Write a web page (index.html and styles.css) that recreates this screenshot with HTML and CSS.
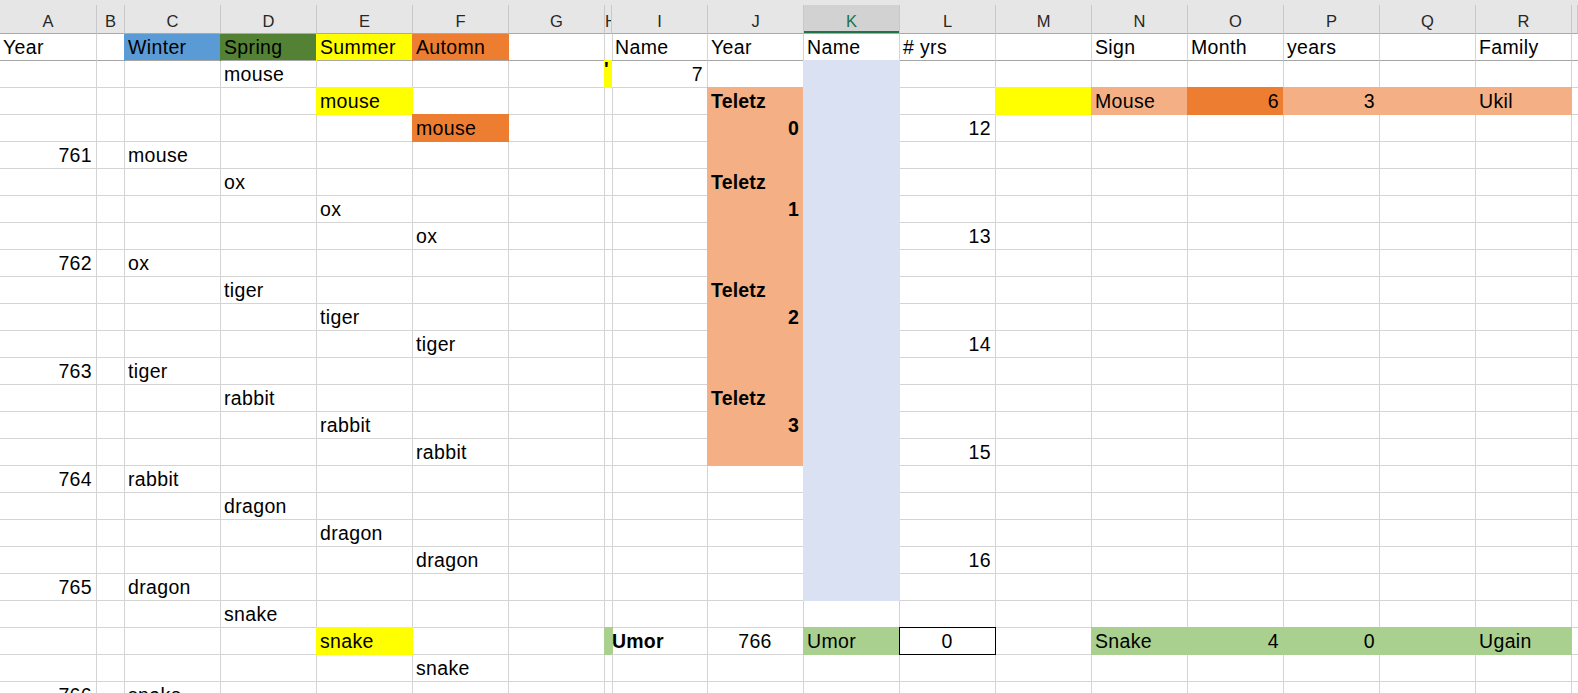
FILE: index.html
```html
<!DOCTYPE html>
<html>
<head>
<meta charset="utf-8">
<title>Sheet</title>
<link rel="stylesheet" href="styles.css">
</head>
<body>
<div class="sheet">
  <div class="topstrip"></div>
  <div class="row colheads">
    <div class="h">A</div><div class="h">B</div><div class="h">C</div><div class="h">D</div><div class="h">E</div><div class="h">F</div><div class="h">G</div><div class="h narrow">H</div><div class="h">I</div><div class="h">J</div><div class="h active">K</div><div class="h">L</div><div class="h">M</div><div class="h">N</div><div class="h">O</div><div class="h">P</div><div class="h">Q</div><div class="h">R</div><div class="h"></div>
  </div>
  <!-- row 1 -->
  <div class="row titles">
    <div class="c">Year</div><div class="c"></div><div class="c f-blue">Winter</div><div class="c f-green">Spring</div><div class="c f-yellow">Summer</div><div class="c f-orange">Automn</div><div class="c"></div><div class="c"></div><div class="c">Name</div><div class="c">Year</div><div class="c">Name</div><div class="c"># yrs</div><div class="c"></div><div class="c">Sign</div><div class="c">Month</div><div class="c">years</div><div class="c"></div><div class="c">Family</div><div class="c"></div>
  </div>
  <!-- row 2 -->
  <div class="row">
    <div class="c"></div><div class="c"></div><div class="c"></div><div class="c">mouse</div><div class="c"></div><div class="c"></div><div class="c"></div><div class="c f-yellow clip"><span class="tick">'</span></div><div class="c r">7</div><div class="c"></div><div class="c f-sky"></div><div class="c"></div><div class="c"></div><div class="c"></div><div class="c"></div><div class="c"></div><div class="c"></div><div class="c"></div><div class="c"></div>
  </div>
  <!-- row 3 -->
  <div class="row">
    <div class="c"></div><div class="c"></div><div class="c"></div><div class="c"></div><div class="c f-yellow">mouse</div><div class="c"></div><div class="c"></div><div class="c"></div><div class="c"></div><div class="c f-peach b">Teletz</div><div class="c f-sky"></div><div class="c"></div><div class="c f-yellow"></div><div class="c f-peach">Mouse</div><div class="c f-orange r">6</div><div class="c f-peach r">3</div><div class="c f-peach"></div><div class="c f-peach">Ukil</div><div class="c"></div>
  </div>
  <!-- row 4 -->
  <div class="row">
    <div class="c"></div><div class="c"></div><div class="c"></div><div class="c"></div><div class="c"></div><div class="c f-orange">mouse</div><div class="c"></div><div class="c"></div><div class="c"></div><div class="c f-peach b r">0</div><div class="c f-sky"></div><div class="c r">12</div><div class="c"></div><div class="c"></div><div class="c"></div><div class="c"></div><div class="c"></div><div class="c"></div><div class="c"></div>
  </div>
  <!-- row 5 -->
  <div class="row">
    <div class="c r">761</div><div class="c"></div><div class="c">mouse</div><div class="c"></div><div class="c"></div><div class="c"></div><div class="c"></div><div class="c"></div><div class="c"></div><div class="c f-peach"></div><div class="c f-sky"></div><div class="c"></div><div class="c"></div><div class="c"></div><div class="c"></div><div class="c"></div><div class="c"></div><div class="c"></div><div class="c"></div>
  </div>
  <!-- row 6 -->
  <div class="row">
    <div class="c"></div><div class="c"></div><div class="c"></div><div class="c">ox</div><div class="c"></div><div class="c"></div><div class="c"></div><div class="c"></div><div class="c"></div><div class="c f-peach b">Teletz</div><div class="c f-sky"></div><div class="c"></div><div class="c"></div><div class="c"></div><div class="c"></div><div class="c"></div><div class="c"></div><div class="c"></div><div class="c"></div>
  </div>
  <!-- row 7 -->
  <div class="row">
    <div class="c"></div><div class="c"></div><div class="c"></div><div class="c"></div><div class="c">ox</div><div class="c"></div><div class="c"></div><div class="c"></div><div class="c"></div><div class="c f-peach b r">1</div><div class="c f-sky"></div><div class="c"></div><div class="c"></div><div class="c"></div><div class="c"></div><div class="c"></div><div class="c"></div><div class="c"></div><div class="c"></div>
  </div>
  <!-- row 8 -->
  <div class="row">
    <div class="c"></div><div class="c"></div><div class="c"></div><div class="c"></div><div class="c"></div><div class="c">ox</div><div class="c"></div><div class="c"></div><div class="c"></div><div class="c f-peach"></div><div class="c f-sky"></div><div class="c r">13</div><div class="c"></div><div class="c"></div><div class="c"></div><div class="c"></div><div class="c"></div><div class="c"></div><div class="c"></div>
  </div>
  <!-- row 9 -->
  <div class="row">
    <div class="c r">762</div><div class="c"></div><div class="c">ox</div><div class="c"></div><div class="c"></div><div class="c"></div><div class="c"></div><div class="c"></div><div class="c"></div><div class="c f-peach"></div><div class="c f-sky"></div><div class="c"></div><div class="c"></div><div class="c"></div><div class="c"></div><div class="c"></div><div class="c"></div><div class="c"></div><div class="c"></div>
  </div>
  <!-- row 10 -->
  <div class="row">
    <div class="c"></div><div class="c"></div><div class="c"></div><div class="c">tiger</div><div class="c"></div><div class="c"></div><div class="c"></div><div class="c"></div><div class="c"></div><div class="c f-peach b">Teletz</div><div class="c f-sky"></div><div class="c"></div><div class="c"></div><div class="c"></div><div class="c"></div><div class="c"></div><div class="c"></div><div class="c"></div><div class="c"></div>
  </div>
  <!-- row 11 -->
  <div class="row">
    <div class="c"></div><div class="c"></div><div class="c"></div><div class="c"></div><div class="c">tiger</div><div class="c"></div><div class="c"></div><div class="c"></div><div class="c"></div><div class="c f-peach b r">2</div><div class="c f-sky"></div><div class="c"></div><div class="c"></div><div class="c"></div><div class="c"></div><div class="c"></div><div class="c"></div><div class="c"></div><div class="c"></div>
  </div>
  <!-- row 12 -->
  <div class="row">
    <div class="c"></div><div class="c"></div><div class="c"></div><div class="c"></div><div class="c"></div><div class="c">tiger</div><div class="c"></div><div class="c"></div><div class="c"></div><div class="c f-peach"></div><div class="c f-sky"></div><div class="c r">14</div><div class="c"></div><div class="c"></div><div class="c"></div><div class="c"></div><div class="c"></div><div class="c"></div><div class="c"></div>
  </div>
  <!-- row 13 -->
  <div class="row">
    <div class="c r">763</div><div class="c"></div><div class="c">tiger</div><div class="c"></div><div class="c"></div><div class="c"></div><div class="c"></div><div class="c"></div><div class="c"></div><div class="c f-peach"></div><div class="c f-sky"></div><div class="c"></div><div class="c"></div><div class="c"></div><div class="c"></div><div class="c"></div><div class="c"></div><div class="c"></div><div class="c"></div>
  </div>
  <!-- row 14 -->
  <div class="row">
    <div class="c"></div><div class="c"></div><div class="c"></div><div class="c">rabbit</div><div class="c"></div><div class="c"></div><div class="c"></div><div class="c"></div><div class="c"></div><div class="c f-peach b">Teletz</div><div class="c f-sky"></div><div class="c"></div><div class="c"></div><div class="c"></div><div class="c"></div><div class="c"></div><div class="c"></div><div class="c"></div><div class="c"></div>
  </div>
  <!-- row 15 -->
  <div class="row">
    <div class="c"></div><div class="c"></div><div class="c"></div><div class="c"></div><div class="c">rabbit</div><div class="c"></div><div class="c"></div><div class="c"></div><div class="c"></div><div class="c f-peach b r">3</div><div class="c f-sky"></div><div class="c"></div><div class="c"></div><div class="c"></div><div class="c"></div><div class="c"></div><div class="c"></div><div class="c"></div><div class="c"></div>
  </div>
  <!-- row 16 -->
  <div class="row">
    <div class="c"></div><div class="c"></div><div class="c"></div><div class="c"></div><div class="c"></div><div class="c">rabbit</div><div class="c"></div><div class="c"></div><div class="c"></div><div class="c f-peach"></div><div class="c f-sky"></div><div class="c r">15</div><div class="c"></div><div class="c"></div><div class="c"></div><div class="c"></div><div class="c"></div><div class="c"></div><div class="c"></div>
  </div>
  <!-- row 17 -->
  <div class="row">
    <div class="c r">764</div><div class="c"></div><div class="c">rabbit</div><div class="c"></div><div class="c"></div><div class="c"></div><div class="c"></div><div class="c"></div><div class="c"></div><div class="c"></div><div class="c f-sky"></div><div class="c"></div><div class="c"></div><div class="c"></div><div class="c"></div><div class="c"></div><div class="c"></div><div class="c"></div><div class="c"></div>
  </div>
  <!-- row 18 -->
  <div class="row">
    <div class="c"></div><div class="c"></div><div class="c"></div><div class="c">dragon</div><div class="c"></div><div class="c"></div><div class="c"></div><div class="c"></div><div class="c"></div><div class="c"></div><div class="c f-sky"></div><div class="c"></div><div class="c"></div><div class="c"></div><div class="c"></div><div class="c"></div><div class="c"></div><div class="c"></div><div class="c"></div>
  </div>
  <!-- row 19 -->
  <div class="row">
    <div class="c"></div><div class="c"></div><div class="c"></div><div class="c"></div><div class="c">dragon</div><div class="c"></div><div class="c"></div><div class="c"></div><div class="c"></div><div class="c"></div><div class="c f-sky"></div><div class="c"></div><div class="c"></div><div class="c"></div><div class="c"></div><div class="c"></div><div class="c"></div><div class="c"></div><div class="c"></div>
  </div>
  <!-- row 20 -->
  <div class="row">
    <div class="c"></div><div class="c"></div><div class="c"></div><div class="c"></div><div class="c"></div><div class="c">dragon</div><div class="c"></div><div class="c"></div><div class="c"></div><div class="c"></div><div class="c f-sky"></div><div class="c r">16</div><div class="c"></div><div class="c"></div><div class="c"></div><div class="c"></div><div class="c"></div><div class="c"></div><div class="c"></div>
  </div>
  <!-- row 21 -->
  <div class="row">
    <div class="c r">765</div><div class="c"></div><div class="c">dragon</div><div class="c"></div><div class="c"></div><div class="c"></div><div class="c"></div><div class="c"></div><div class="c"></div><div class="c"></div><div class="c f-sky"></div><div class="c"></div><div class="c"></div><div class="c"></div><div class="c"></div><div class="c"></div><div class="c"></div><div class="c"></div><div class="c"></div>
  </div>
  <!-- row 22 -->
  <div class="row">
    <div class="c"></div><div class="c"></div><div class="c"></div><div class="c">snake</div><div class="c"></div><div class="c"></div><div class="c"></div><div class="c"></div><div class="c"></div><div class="c"></div><div class="c"></div><div class="c"></div><div class="c"></div><div class="c"></div><div class="c"></div><div class="c"></div><div class="c"></div><div class="c"></div><div class="c"></div>
  </div>
  <!-- row 23 -->
  <div class="row">
    <div class="c"></div><div class="c"></div><div class="c"></div><div class="c"></div><div class="c f-yellow">snake</div><div class="c"></div><div class="c"></div><div class="c f-lime"></div><div class="c b flush">Umor</div><div class="c ctr">766</div><div class="c f-lime">Umor</div><div class="c ctr sel">0</div><div class="c"></div><div class="c f-lime">Snake</div><div class="c f-lime r">4</div><div class="c f-lime r">0</div><div class="c f-lime"></div><div class="c f-lime">Ugain</div><div class="c"></div>
  </div>
  <!-- row 24 -->
  <div class="row">
    <div class="c"></div><div class="c"></div><div class="c"></div><div class="c"></div><div class="c"></div><div class="c">snake</div><div class="c"></div><div class="c"></div><div class="c"></div><div class="c"></div><div class="c"></div><div class="c"></div><div class="c"></div><div class="c"></div><div class="c"></div><div class="c"></div><div class="c"></div><div class="c"></div><div class="c"></div>
  </div>
  <!-- row 25 -->
  <div class="row">
    <div class="c r">766</div><div class="c"></div><div class="c">snake</div><div class="c"></div><div class="c"></div><div class="c"></div><div class="c"></div><div class="c"></div><div class="c"></div><div class="c"></div><div class="c"></div><div class="c"></div><div class="c"></div><div class="c"></div><div class="c"></div><div class="c"></div><div class="c"></div><div class="c"></div><div class="c"></div>
  </div>
</div>
</body>
</html>
```
FILE: styles.css
```css
html, body {
  margin: 0;
  padding: 0;
  background: #ffffff;
}
body {
  width: 1578px;
  height: 693px;
  overflow: hidden;
  font-family: "Liberation Sans", Arial, sans-serif;
  color: #000;
}
.sheet {
  display: flex;
  flex-direction: column;
}
.topstrip {
  height: 5px;
  background: #e6e6e6;
}
.row {
  display: grid;
  grid-template-columns: 97px 28px repeat(5, 96px) 7px repeat(10, 96px) 6px;
  grid-auto-rows: 27px;
}
.row.colheads {
  grid-auto-rows: 29px;
  background: #e6e6e6;
}
.h {
  box-sizing: border-box;
  border-right: 1px solid #c8c8c8;
  border-bottom: 1px solid #a9a9a9;
  font-size: 16.5px;
  line-height: 20px;
  color: #262626;
  text-align: center;
  display: flex;
  align-items: flex-end;
  justify-content: center;
  padding-bottom: 2px;
  overflow: hidden;
}
.h.narrow {
  justify-content: flex-start;
  padding-left: 0;
}
.h.active {
  background: #d2d2d2;
  color: #217346;
  box-shadow: inset 0 -2px 0 #217346;
}
.c {
  --fill: transparent;
  box-sizing: border-box;
  border-right: 1px solid #d4d4d4;
  border-bottom: 1px solid #d4d4d4;
  padding: 0 4px 0 3px;
  font-size: 19.5px;
  line-height: 26px;
  letter-spacing: 0.35px;
  white-space: nowrap;
  min-width: 0;
}
.c.r { text-align: right; }
.c.ctr { text-align: center; }
.c.b { font-weight: bold; letter-spacing: 0.2px; }
.c.flush { padding-left: 0; }
.c.clip { overflow: hidden; padding: 0; }
.tick {
  display: block;
  font-weight: bold;
  line-height: 16px;
  margin-left: -1px;
}

.f-blue { --fill: #5b9bd5; }
.f-green { --fill: #548235; }
.f-yellow { --fill: #ffff00; }
.f-orange { --fill: #ed7d31; }
.f-peach { --fill: #f4b084; }
.f-sky { --fill: #d9e1f2; }
.f-lime { --fill: #a9d08e; }

.f-blue, .f-green, .f-yellow, .f-orange, .f-peach, .f-sky, .f-lime {
  background: var(--fill);
  border-right-color: var(--fill);
  border-bottom-color: var(--fill);
  box-shadow: -1px -1px 0 var(--fill), -1px 0 0 var(--fill), 0 -1px 0 var(--fill);
}

.row.titles .c {
  border-bottom-color: #a6a6a6;
}
.row.titles .f-blue, .row.titles .f-green, .row.titles .f-yellow, .row.titles .f-orange {
  box-shadow: -1px 0 0 var(--fill);
}

.sel {
  position: relative;
  border-right-color: #000;
  border-bottom-color: #000;
}
.sel::after {
  content: "";
  position: absolute;
  left: -1px;
  top: -1px;
  right: -1px;
  bottom: -1px;
  border: 1px solid #000;
  pointer-events: none;
}
```
